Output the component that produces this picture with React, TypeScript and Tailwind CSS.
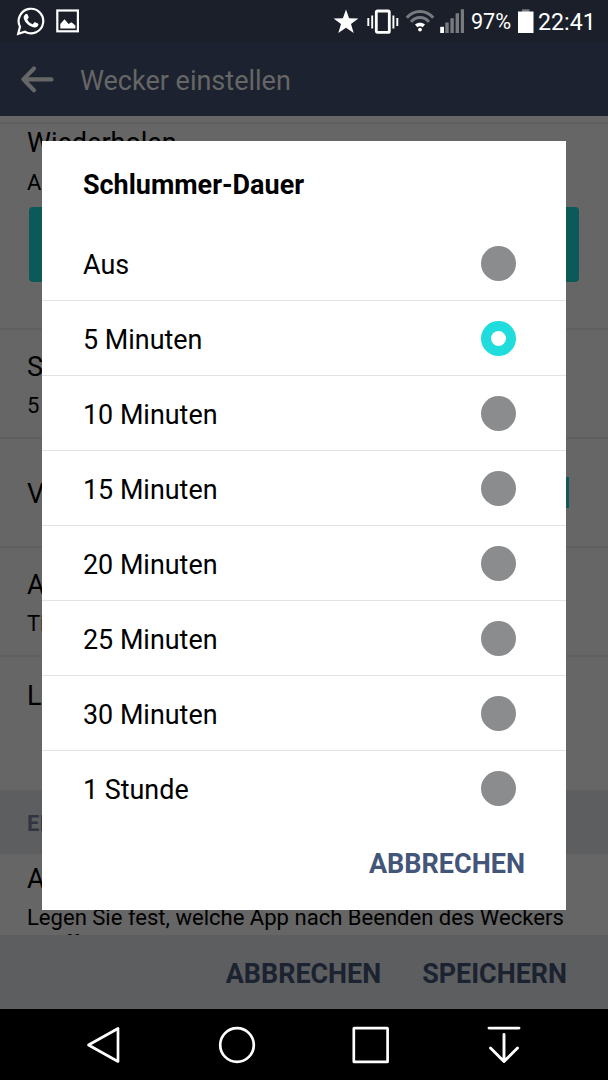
import React from "react";

const options = [
  "Aus",
  "5 Minuten",
  "10 Minuten",
  "15 Minuten",
  "20 Minuten",
  "25 Minuten",
  "30 Minuten",
  "1 Stunde",
];

function StatusBar() {
  return (
    <div className="flex h-[42px] shrink-0 items-center justify-between bg-[#1a1f29] pl-[16px] pr-[13px] text-white">
      <div className="flex items-center gap-[11px]">
        <svg width="29" height="30" viewBox="0 0 29 30" fill="none">
          <path d="M2.2 27.8 4 20.7A12.3 12.3 0 1 1 8.9 25.8Z" stroke="white" strokeWidth="2.2" strokeLinejoin="miter" />
          <path
            d="M9.3 8.2c.6-.7 1.8-.7 2.2.1l1.1 2.7c.2.6-.1 1-.5 1.5l-.6.7c-.3.3-.2.6 0 .9 1.1 1.9 2.5 3.2 4.6 4 .4.2.7.1.9-.2l1.2-1.4c.3-.4.6-.4 1-.2l2.7 1.3c.5.2.6.5.5 1-.2 2.2-2.2 3.1-4 2.9-5-.7-9.4-4.5-10.6-8.9-.4-1.8.2-3.3 1.5-4.4Z"
            fill="white"
          />
        </svg>
        <svg width="24" height="24" viewBox="0 0 24 24" fill="none">
          <rect x="1.3" y="1.5" width="20.6" height="20.8" stroke="white" strokeWidth="2.2" />
          <path d="M4.3 19.6v-4.5l4.2-4.8 4 4.6 3-1.6 3.9 3.1v3.2Z" fill="white" />
        </svg>
      </div>
      <div className="flex items-center">
        <svg width="26" height="26" viewBox="0 0 26 26" className="mt-[2px] shrink-0">
          <path d="m13 .5 3.1 8.8 9.3.2-7.4 5.6 2.7 9-7.7-5.4-7.7 5.4 2.7-9L.6 9.5l9.3-.2Z" fill="white" />
        </svg>
        <svg width="32" height="26" viewBox="0 0 32 26" className="ml-[8px] mt-[1px] shrink-0">
          <rect x="9.3" y="2" width="13" height="21.4" rx="1.2" fill="none" stroke="white" strokeWidth="2.8" />
          <path d="M1.3 9v8M5.2 6.5v13M26.4 6.5v13M30.3 9v8" stroke="white" strokeWidth="1.9" />
        </svg>
        <svg width="30" height="24" viewBox="0 0 30 24" className="ml-[6px] shrink-0" fill="none">
          <path d="M1.8 8.8C8.7.3 21.3.3 28.2 8.8M6 12.9c4.7-6 13.3-6 18 0" stroke="#777b80" strokeWidth="3" />
          <path d="M10 15.6c2.7-2.6 7.3-2.6 10 0l-2.4 2.7c-1.6-1.4-3.6-1.4-5.2 0Z" fill="white" />
          <circle cx="15" cy="20.6" r="1.9" fill="white" />
        </svg>
        <svg width="26" height="26" viewBox="0 0 26 26" className="ml-[4px] shrink-0">
          <path d="M1.2 18.8H5V25H1.2Z" fill="white" />
          <path d="M6.3 14.5h3.4V25H6.3ZM11.4 10.3h3.4V25h-3.4ZM16.6 5.3H20V25h-3.4ZM21.8 1.2h3.2V25h-3.2Z" fill="#777b80" />
        </svg>
        <span className="ml-[6px] mt-[2px] w-[40px] whitespace-nowrap text-[21.7px] leading-[26px] tracking-[-0.1px]">97%</span>
        <svg width="18" height="26" viewBox="0 0 18 26" className="ml-[7px] shrink-0">
          <path d="M4 1.3h7.5V4H4Z" fill="#777b80" />
          <path d="M0 3.5h15.5V25H0Z" fill="white" />
        </svg>
        <span className="ml-[2px] mt-[2px] w-[57px] whitespace-nowrap text-[23.2px] leading-[26px]">22:41</span>
      </div>
    </div>
  );
}

function Setting({ title, value }: { title: string; value: string }) {
  return (
    <div className="h-[109px] shrink-0 border-b-2 border-[#5f5f5f] px-[27px] pt-[17px]">
      <div className="text-[27px] leading-[40px]">{title}</div>
      <div className="text-[22.05px] leading-[38px] tracking-[-0.1px]">{value}</div>
    </div>
  );
}

function AlarmSettings() {
  return (
    <div className="flex h-[819px] shrink-0 flex-col overflow-hidden bg-[#666] text-black">
      <div className="h-[8px] shrink-0 border-b-2 border-[#5f5f5f]" />
      <div className="h-[206px] shrink-0 border-b-2 border-[#5f5f5f] px-[27px]">
        <div className="text-[27px] leading-[38px]">Wiederholen</div>
        <div className="text-[22px] leading-[42px]">Aus</div>
        <div className="ml-[2px] mt-[3px] h-[75px] w-[550px] rounded-[4px] bg-[#0b5958]" />
      </div>
      <Setting title="Schlummer-Dauer" value="5 Minuten" />
      <div className="flex h-[109px] shrink-0 items-center justify-between border-b-2 border-[#5f5f5f] pl-[27px] pr-[39px]">
        <div className="pt-[3px] text-[27px] leading-[40px]">Vibration</div>
        <div className="h-[31px] w-[31px] bg-[#0b5958]" />
      </div>
      <Setting title="Alarmton" value="Titel" />
      <div className="h-[133px] shrink-0 px-[27px] pt-[19px] text-[27px] leading-[40px]">Lautstärke</div>
      <div className="flex h-[64px] shrink-0 items-center bg-[#5d5e60] px-[27px] pt-[2px] text-[22px] font-bold text-[#30353f]">
        EINSTELLUNGEN
      </div>
      <div className="shrink-0 px-[27px] pt-[5px]">
        <div className="text-[27px] leading-[40px]">App</div>
        <div className="whitespace-nowrap text-[22.05px] leading-[38px]">
          Legen Sie fest, welche App nach Beenden des Weckers
        </div>
        <div className="-mt-[8px] text-[22.05px] leading-[30px]">geöffnet werden soll</div>
      </div>
    </div>
  );
}

function SnoozeDialog() {
  return (
    <div role="dialog" className="absolute left-[42px] top-[141px] flex h-[769px] w-[524px] flex-col bg-white text-black">
      <h2 className="h-[85px] shrink-0 pl-[41px] pt-[24px] text-[26.95px] font-bold leading-[40px]">Schlummer-Dauer</h2>
      {options.map((label, i) => (
        <div
          key={label}
          className={`flex h-[75px] shrink-0 items-center justify-between border-b pl-[41px] pr-[50px] ${
            i === options.length - 1 ? "border-transparent" : "border-[#e2e2e2]"
          }`}
        >
          <span className="pt-[4px] text-[26.9px] leading-[40px]">{label}</span>
          <span
            className={`flex h-[35px] w-[35px] items-center justify-center rounded-full ${
              i === 1 ? "bg-[#20dcdc]" : "bg-[#8b8c8e]"
            }`}
          >
            {i === 1 && <span className="h-[15px] w-[15px] rounded-full bg-white" />}
          </span>
        </div>
      ))}
      <div className="flex justify-end pr-[41px] pt-[18px] text-[27px] font-bold leading-[40px] text-[#435579]">ABBRECHEN</div>
    </div>
  );
}

function NavigationBar() {
  return (
    <div className="flex h-[71px] shrink-0 items-center bg-black pl-[86px]">
      <svg width="36" height="40" viewBox="0 0 36 40" fill="none">
        <path d="M32 3.5v33L2.5 20Z" stroke="white" strokeWidth="2.7" strokeLinejoin="round" />
      </svg>
      <svg width="40" height="40" viewBox="0 0 40 40" fill="none" className="ml-[95px]">
        <circle cx="20" cy="20" r="16.8" stroke="white" strokeWidth="2.7" />
      </svg>
      <svg width="40" height="40" viewBox="0 0 40 40" fill="none" className="ml-[94px]">
        <rect x="2.8" y="3.1" width="33.8" height="33.8" rx=".5" stroke="white" strokeWidth="2.7" />
      </svg>
      <svg width="40" height="40" viewBox="0 0 40 40" fill="none" className="ml-[93px]">
        <path d="M5 3.1h30M20 9.5V36.5M6.5 23 20 36.5 33.5 23" stroke="white" strokeWidth="2.9" strokeLinecap="round" strokeLinejoin="round" />
      </svg>
    </div>
  );
}

export default function App() {
  return (
    <div className="relative flex h-[1080px] w-[608px] flex-col overflow-hidden bg-black font-['Roboto',sans-serif]">
      <StatusBar />
      <header className="flex h-[74px] shrink-0 items-center bg-[#1c222f] pl-[20px] text-[#666]">
        <svg width="36" height="30" viewBox="0 0 36 30" fill="none">
          <path d="M31.5 15.4H3.5M14 4.5 3.3 15.4 14 26.3" stroke="#666" strokeWidth="4.2" strokeLinecap="round" strokeLinejoin="round" />
        </svg>
        <h1 className="ml-[24px] pt-[4px] text-[27px] leading-[40px]">Wecker einstellen</h1>
      </header>
      <AlarmSettings />
      <footer className="flex h-[74px] shrink-0 items-center justify-end gap-[41px] bg-[#5d5e60] pr-[41px] pt-[4px] text-[26.9px] font-bold text-[#1b2230]">
        <span>ABBRECHEN</span>
        <span>SPEICHERN</span>
      </footer>
      <NavigationBar />
      <SnoozeDialog />
    </div>
  );
}
